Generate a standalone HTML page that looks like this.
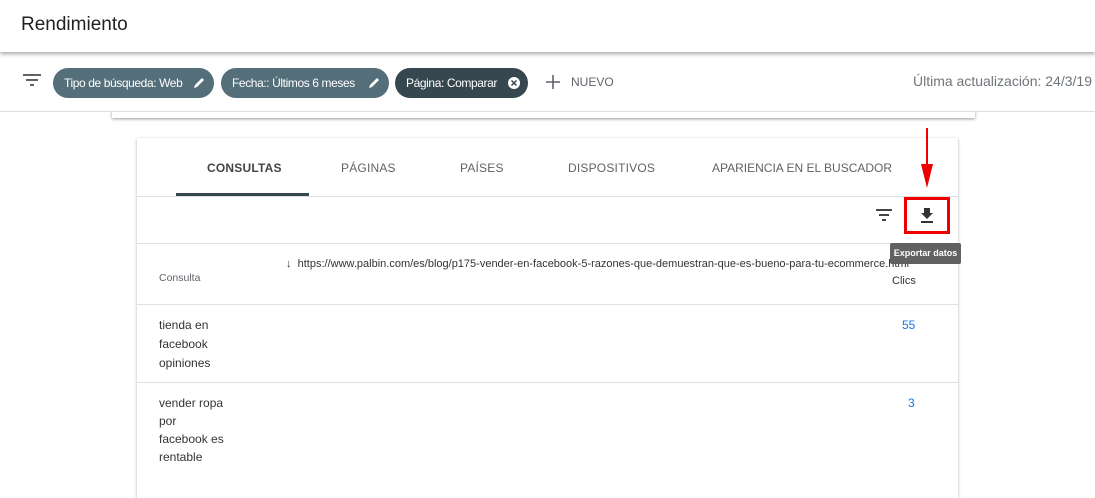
<!DOCTYPE html>
<html><head><meta charset="utf-8"><style>
*{margin:0;padding:0;box-sizing:border-box}
body{width:1095px;height:478px;overflow:hidden;background:#fff;font-family:"Liberation Sans",sans-serif;position:relative;color:#202124}
.hdr{position:absolute;left:0;top:0;width:1095px;height:52px;background:#fff;box-shadow:0 2px 4px rgba(0,0,0,.35);z-index:3}
.hdr h1{position:absolute;left:21px;top:14px;font-size:19px;font-weight:normal;color:#202124}
.bar{position:absolute;left:0;top:52px;width:1095px;height:60px;border-bottom:1px solid #ddd;background:#fff;z-index:2}
.chip{position:absolute;top:16px;height:30px;border-radius:15px;background:#546e7a;color:#fff;font-size:12px;letter-spacing:-.4px;line-height:30px;padding-left:11px;white-space:nowrap}
.topcard{position:absolute;left:112px;top:100px;width:863px;height:18px;background:#fff;box-shadow:0 1px 3px rgba(0,0,0,.4);z-index:1}
.card{position:absolute;left:137px;top:138px;width:821px;height:360px;background:#fff;box-shadow:0 1px 3px rgba(0,0,0,.3)}
.tab{position:absolute;top:23px;font-size:12px;color:#5f6368;letter-spacing:.2px;white-space:nowrap}
.line{position:absolute;left:0;width:821px;height:1px;background:#e0e0e0}
.t{position:absolute;font-size:12px;color:#333;white-space:nowrap}
</style></head><body>
<div class="hdr"><h1>Rendimiento</h1></div>
<div class="bar">
<svg style="position:absolute;left:23px;top:21px" width="18" height="14"><path d="M0 2h18M3 7h12M7 12h4" stroke="#5f6368" stroke-width="2"/></svg>
<div class="chip" style="left:53px;width:161px">Tipo de búsqueda: Web<svg style="position:absolute;right:9px;top:9px" width="12" height="12"><path d="M1 11l1-3 7-7 2 2-7 7z" fill="#fff"/></svg></div>
<div class="chip" style="left:221px;width:168px">Fecha:: Últimos 6 meses<svg style="position:absolute;right:9px;top:9px" width="12" height="12"><path d="M1 11l1-3 7-7 2 2-7 7z" fill="#fff"/></svg></div>
<div class="chip" style="left:395px;width:133px;background:#37474f">Página: Comparar<svg style="position:absolute;right:8px;top:9px" width="12" height="12"><circle cx="6" cy="6" r="6" fill="#fff"/><path d="M3.5 3.5l5 5M8.5 3.5l-5 5" stroke="#37474f" stroke-width="1.5"/></svg></div>
<svg style="position:absolute;left:545px;top:22px" width="16" height="16"><path d="M8 1v14M1 8h14" stroke="#5f6368" stroke-width="1.6"/></svg>
<div style="position:absolute;left:571px;top:23px;font-size:12px;color:#5f6368">NUEVO</div>
<div style="position:absolute;left:913px;top:21px;font-size:14px;color:#70757a">Última actualización: 24/3/19</div>
</div>
<div class="topcard"></div>
<div class="card">
<div class="tab" style="left:70px;color:#444;font-weight:bold">CONSULTAS</div>
<div style="position:absolute;left:39px;top:55px;width:133px;height:3px;background:#37474f"></div>
<div class="tab" style="left:204px">PÁGINAS</div>
<div class="tab" style="left:323px">PAÍSES</div>
<div class="tab" style="left:431px">DISPOSITIVOS</div>
<div class="tab" style="left:575px;letter-spacing:0">APARIENCIA EN EL BUSCADOR</div>
<div class="line" style="top:58px"></div>
<svg style="position:absolute;left:739px;top:71px" width="16" height="12"><path d="M0 1h16M3 6h10M6 11h4" stroke="#444" stroke-width="2"/></svg>
<svg style="position:absolute;left:782px;top:69px" width="16" height="16"><path d="M5 1h6v5h3L8 12 2 6h3z" fill="#333"/><path d="M2 15h12" stroke="#333" stroke-width="2"/></svg>
<div style="position:absolute;left:767px;top:59px;width:46px;height:37px;border:3px solid #e00"></div>
<div class="line" style="top:105px"></div>
<div class="t" style="left:22px;top:134px;font-size:10.5px;color:#5f6368">Consulta</div>
<div class="t" style="left:149px;top:120px;font-size:11px">↓&nbsp; https://www.palbin.com/es/blog/p175-vender-en-facebook-5-razones-que-demuestran-que-es-bueno-para-tu-ecommerce.html</div>
<div class="t" style="left:755px;top:137px;font-size:11px">Clics</div>
<div class="line" style="top:166px"></div>
<div class="t" style="left:22px;top:178px;line-height:19px">tienda en<br>facebook<br>opiniones</div>
<div class="t" style="left:765px;top:180px;color:#1a73e8">55</div>
<div class="line" style="top:244px"></div>
<div class="t" style="left:22px;top:256px;line-height:18px">vender ropa<br>por<br>facebook es<br>rentable</div>
<div class="t" style="left:771px;top:258px;color:#1a73e8">3</div>
</div>
<div style="position:absolute;left:890px;top:243px;width:71px;height:21px;background:#616161;color:#fff;font-size:9px;font-weight:bold;line-height:21px;text-align:center;border-radius:2px;white-space:nowrap">Exportar datos</div>
<svg style="position:absolute;left:919px;top:128px" width="16" height="62"><path d="M8 0v40" stroke="#e00" stroke-width="2"/><path d="M2 36l6 24 6-24z" fill="#e00"/></svg>
</body></html>
